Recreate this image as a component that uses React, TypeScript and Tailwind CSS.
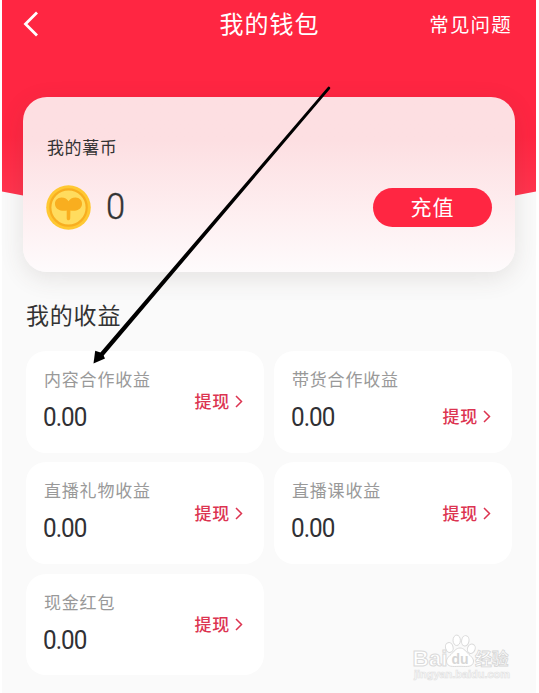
import React from 'react';

type Income = { label: string; low?: boolean };

const incomes: Income[] = [
  { label: '内容合作收益' },
  { label: '带货合作收益', low: true },
  { label: '直播礼物收益' },
  { label: '直播课收益' },
  { label: '现金红包' },
];

function IncomeCard({ label, low }: Income) {
  return (
    <div className="flex h-[101.5px] items-center justify-between rounded-[20px] bg-white pl-[18px] pr-[21px]">
      <div className="flex flex-col self-start pt-[16px]">
        <span className="text-[17px] leading-6 tracking-[0.8px] text-[#999]">{label}</span>
        <span className="ml-[-1px] mt-[13px] origin-left scale-x-[0.97] font-[Roboto,sans-serif] text-[25px] leading-7 tracking-[-1px] text-[#303034]">0.00</span>
      </div>
      <button
        className={`flex items-center text-[17px] font-medium leading-6 tracking-[0.8px] text-[#dc3451] ${low ? 'pt-[30px]' : ''}`}
      >
        <span className="-mt-px">提现</span>
        <svg className="ml-[5px]" width="8" height="13" viewBox="0 0 8 13" fill="none" stroke="currentColor" strokeWidth="1.5">
          <path d="M1 1l5.5 5.5L1 12" />
        </svg>
      </button>
    </div>
  );
}

function Coin() {
  return (
    <svg className="-ml-px" width="45" height="45" viewBox="0 0 45 45">
      <circle cx="22.5" cy="22.5" r="22.3" fill="#ffc832" />
      <circle cx="22.5" cy="22.5" r="18.2" fill="#ffdc5e" stroke="#f8ae20" strokeWidth="2.2" />
      <path
        d="M20.700 25.500C16 26.600 9.500 25 9 19.500 8.600 15.500 11.500 12.500 15.500 12.500c3.500 0 5.500 1.500 7 3.800 1.500-2.300 3.500-3.800 7-3.800 4 0 7 3 6.500 7-.6 5.500-7 7.100-11.600 6l-.2 8c-.1 2.400-3.500 2.400-3.500 0z"
        fill="#f9ae1f"
      />
    </svg>
  );
}

function Watermark() {
  return (
    <svg className="absolute left-[410px] top-[630px]" width="106" height="56" viewBox="0 0 106 56">
      <g fill="#fff" stroke="#dadada" strokeWidth="1">
        <ellipse cx="39.3" cy="17.5" rx="3.8" ry="5" transform="rotate(-14 39.3 17.5)" />
        <ellipse cx="46.7" cy="10.3" rx="3.7" ry="5.2" />
        <ellipse cx="55.3" cy="10.800" rx="3.7" ry="5.2" transform="rotate(10 55.3 10.8)" />
        <ellipse cx="61.300" cy="18.700" rx="3.8" ry="4.800" transform="rotate(20 61.3 18.7)" />
        <path d="M50 18c4 0 6 3.500 9 6.500 3.500 3 5.500 5.500 4 9-1.800 4-8.300 2.800-13 2.800s-11.200 1.200-13-2.800c-1.500-3.500.5-6 4-9C44 21.500 46 18 50 18z" />
      </g>
      <g
        fontFamily='"Liberation Sans", "Noto Sans CJK SC", sans-serif'
        fontWeight="bold"
        fill="#fff"
        stroke="#dadada"
        strokeWidth="1"
      >
        <text x="2.5" y="35.500" fontSize="22.500">Bai</text>
        <text x="41.500" y="33.500" fontSize="14" fill="#d6d6d6" stroke="none">du</text>
        <text x="65" y="34.500" fontSize="16.800" strokeWidth="0.8" stroke="#d6d6d6">经验</text>
        <text x="4" y="48" fontSize="11" textLength="96" lengthAdjust="spacingAndGlyphs" stroke="#e2e2e2" strokeWidth="0.7">jingyan.baidu.com</text>
      </g>
    </svg>
  );
}

export default function App() {
  return (
    <div className="relative h-[693px] w-[539px] overflow-hidden bg-white pl-[2px] pr-[3px] font-['Noto_Sans_CJK_SC',sans-serif]">
      <div className="relative h-full bg-[#fafafa]">
        <svg className="absolute left-0 top-0" width="534" height="210" viewBox="0 0 534 210">
          <defs>
            <linearGradient id="hero" x1="0" y1="0" x2="0" y2="1">
              <stop offset="0.7" stopColor="#ff2642" />
              <stop offset="1" stopColor="#ff344e" />
            </linearGradient>
          </defs>
          <path d="M0 0h534v191.500L513 195.500H21L0 191.500z" fill="url(#hero)" />
        </svg>

        <div className="relative">
          <header className="grid h-12 grid-cols-[1fr_auto_1fr] items-center pl-[21px] pr-6 text-white">
            <svg width="16" height="26" viewBox="0 0 16 26" fill="none" stroke="currentColor" strokeWidth="2.8">
              <path d="M14 1.500L2.500 13 14 24.500" />
            </svg>
            <h1 className="-mt-[2px] ml-[4px] text-[24px] leading-9 tracking-[1px]">我的钱包</h1>
            <span className="justify-self-end text-[19.500px] leading-8 tracking-[1.200px]">常见问题</span>
          </header>

          <section className="mx-[21px] mt-[49px] h-[175px] rounded-[24px] bg-linear-to-b from-[#fddfe2] from-25% to-[#fefbfc] px-6 shadow-[0_6px_24px_rgba(70,60,50,0.12)]">
            <p className="pt-[38px] text-[17px] leading-6 tracking-[0.600px] text-[#333]">我的薯币</p>
            <div className="mt-[25px] flex h-[46px] items-center">
              <Coin />
              <span className="ml-[15px] origin-left scale-x-[0.93] font-[Roboto,sans-serif] text-[37px] font-light leading-10 text-[#333] [-webkit-text-stroke:0.4px_#333]">0</span>
              <button className="ml-auto mr-[-1px] h-[39px] w-[119px] rounded-full bg-[#ff2642] pb-[2px] text-[21px] leading-8 tracking-[1px] text-white">
                充值
              </button>
            </div>
          </section>

          <h2 className="ml-6 mt-[24px] text-[23px] leading-9 tracking-[0.800px] text-[#333]">我的收益</h2>

          <section className="ml-6 mr-6 mt-[19px] grid grid-cols-2 gap-x-[10px] gap-y-[9.800px]">
            {incomes.map((item) => (
              <IncomeCard key={item.label} {...item} />
            ))}
          </section>
        </div>
      </div>

      <Watermark />

      <svg className="pointer-events-none absolute left-0 top-0" width="539" height="400" viewBox="0 0 539 400">
        <path d="M93.500 363.500L95.200 350.800 100.500 352.500 103.300 355 105 358.500z" fill="#000" />
        <path d="M327.700 87.200a1.300 1.300 0 0 1 2.200 1.700L103.300 356 100 353z" fill="#000" />
      </svg>
    </div>
  );
}
